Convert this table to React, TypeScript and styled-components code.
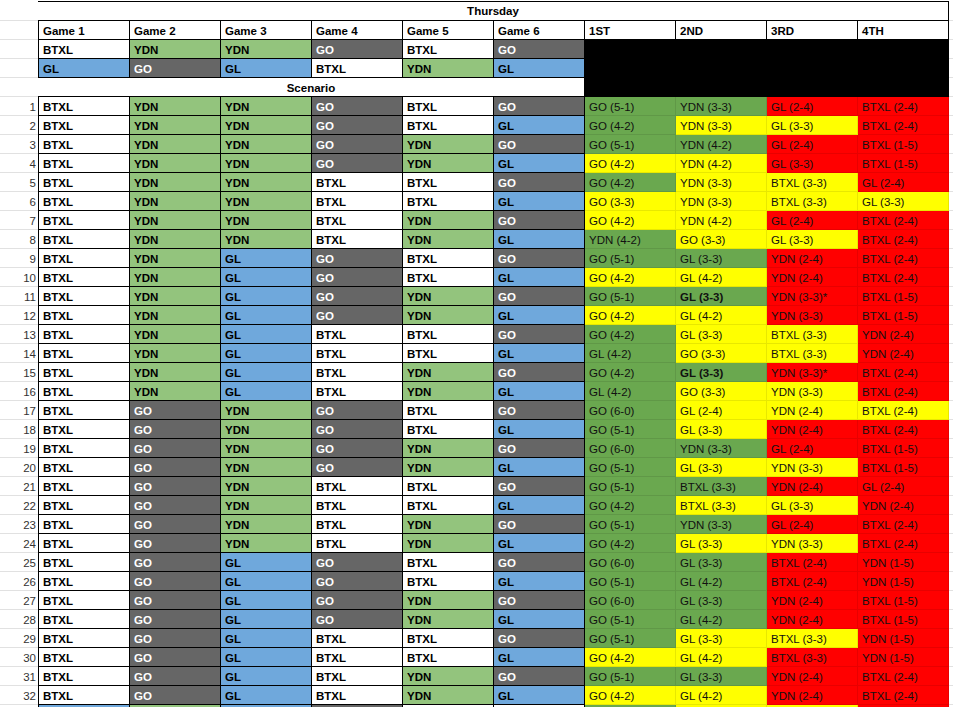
import React from "react";
import styled, { createGlobalStyle, css } from "styled-components";

type Team = "BTXL" | "YDN" | "GO" | "GL";
type Tone = "g" | "y" | "r";

const GlobalStyle = createGlobalStyle`
  body {
    margin: 0;
    background: #ffffff;
    font-family: "Liberation Sans", Arial, sans-serif;
  }
`;

const teamFill: Record<Team, string> = {
  BTXL: "#ffffff",
  YDN: "#93c47d",
  GO: "#666666",
  GL: "#6fa8dc",
};

const toneFill: Record<Tone, string> = {
  g: "#6aa84f",
  y: "#ffff00",
  r: "#ff0000",
};

const Sheet = styled.div`
  display: grid;
  grid-template-columns: 38px 92px repeat(9, 91px) 1fr;
  grid-template-rows: 20px;
  grid-auto-rows: 19px;
  padding-top: 1px;
  width: 953px;
  height: 706px;
  overflow: hidden;
  font-size: 11.5px;
  color: #000;
`;

const textBox = css`
  box-sizing: border-box;
  padding: 4px 4px 0;
  line-height: 13px;
  white-space: nowrap;
  overflow: hidden;
`;

const RowNum = styled.div`
  ${textBox};
  padding-right: 2px;
  text-align: right;
  color: #333;
  border-bottom: 1px solid #e1e1e1;
`;

const Filler = styled.div`
  border-bottom: 1px solid #e1e1e1;
`;

const Cell = styled.div<{ $fill?: string; $first?: boolean; $dark?: boolean }>`
  ${textBox};
  font-weight: bold;
  background: ${(p) => p.$fill ?? "#ffffff"};
  color: ${(p) => (p.$dark ? "#ffffff" : "#000000")};
  border-right: 1px solid #000;
  border-bottom: 1px solid #000;
  ${(p) => p.$first && "border-left: 1px solid #000;"}
`;

const Title = styled(Cell)`
  grid-column: 2 / span 10;
  border-top: 1px solid #000;
  padding-top: 3px;
  text-align: center;
`;

const Scenario = styled(Cell)`
  grid-column: 2 / span 6;
  text-align: center;
`;

const Blackout = styled.div`
  grid-column: 8 / span 4;
  grid-row: 3 / span 3;
  background: #000;
`;

const Result = styled.div<{ $tone: Tone; $bold?: boolean }>`
  ${textBox};
  background: ${(p) => toneFill[p.$tone]};
  font-weight: ${(p) => (p.$bold ? "bold" : "normal")};
  color: #111;
  border-right: 1px solid rgba(0, 0, 0, 0.09);
  border-bottom: 1px solid rgba(0, 0, 0, 0.09);
`;

const headerTeams: Team[][] = [
  ["BTXL", "YDN", "YDN", "GO", "BTXL", "GO"],
  ["GL", "GO", "GL", "BTXL", "YDN", "GL"],
];

// games for scenario i (0-based) follow a binary enumeration
const gamesFor = (i: number): Team[] => [
  "BTXL",
  i < 16 ? "YDN" : "GO",
  Math.floor(i / 8) % 2 === 0 ? "YDN" : "GL",
  Math.floor(i / 4) % 2 === 0 ? "GO" : "BTXL",
  Math.floor(i / 2) % 2 === 0 ? "BTXL" : "YDN",
  i % 2 === 0 ? "GO" : "GL",
];

// "text:tone" with a trailing ! for bold
const results: string[] = [
  "GO (5-1):g|YDN (3-3):g|GL (2-4):r|BTXL (2-4):r",
  "GO (4-2):g|YDN (3-3):y|GL (3-3):y|BTXL (2-4):r",
  "GO (5-1):g|YDN (4-2):g|GL (2-4):r|BTXL (1-5):r",
  "GO (4-2):y|YDN (4-2):y|GL (3-3):r|BTXL (1-5):r",
  "GO (4-2):g|YDN (3-3):y|BTXL (3-3):y|GL (2-4):r",
  "GO (3-3):y|YDN (3-3):y|BTXL (3-3):y|GL (3-3):y",
  "GO (4-2):y|YDN (4-2):y|GL (2-4):r|BTXL (2-4):r",
  "YDN (4-2):g|GO (3-3):y|GL (3-3):y|BTXL (2-4):r",
  "GO (5-1):g|GL (3-3):g|YDN (2-4):r|BTXL (2-4):r",
  "GO (4-2):y|GL (4-2):y|YDN (2-4):r|BTXL (2-4):r",
  "GO (5-1):g|GL (3-3):g!|YDN (3-3)*:r|BTXL (1-5):r",
  "GO (4-2):y|GL (4-2):y|YDN (3-3):r|BTXL (1-5):r",
  "GO (4-2):g|GL (3-3):y|BTXL (3-3):y|YDN (2-4):r",
  "GL (4-2):g|GO (3-3):y|BTXL (3-3):y|YDN (2-4):r",
  "GO (4-2):g|GL (3-3):g!|YDN (3-3)*:r|BTXL (2-4):r",
  "GL (4-2):g|GO (3-3):y|YDN (3-3):y|BTXL (2-4):r",
  "GO (6-0):g|GL (2-4):y|YDN (2-4):y|BTXL (2-4):y",
  "GO (5-1):g|GL (3-3):y|YDN (2-4):r|BTXL (2-4):r",
  "GO (6-0):g|YDN (3-3):g|GL (2-4):r|BTXL (1-5):r",
  "GO (5-1):g|GL (3-3):y|YDN (3-3):y|BTXL (1-5):r",
  "GO (5-1):g|BTXL (3-3):g|YDN (2-4):r|GL (2-4):r",
  "GO (4-2):g|BTXL (3-3):y|GL (3-3):y|YDN (2-4):r",
  "GO (5-1):g|YDN (3-3):g|GL (2-4):r|BTXL (2-4):r",
  "GO (4-2):g|GL (3-3):y|YDN (3-3):y|BTXL (2-4):r",
  "GO (6-0):g|GL (3-3):g|BTXL (2-4):r|YDN (1-5):r",
  "GO (5-1):g|GL (4-2):g|BTXL (2-4):r|YDN (1-5):r",
  "GO (6-0):g|GL (3-3):g|YDN (2-4):r|BTXL (1-5):r",
  "GO (5-1):g|GL (4-2):g|YDN (2-4):r|BTXL (1-5):r",
  "GO (5-1):g|GL (3-3):y|BTXL (3-3):y|YDN (1-5):r",
  "GO (4-2):y|GL (4-2):y|BTXL (3-3):r|YDN (1-5):r",
  "GO (5-1):g|GL (3-3):g|YDN (2-4):r|BTXL (2-4):r",
  "GO (4-2):y|GL (4-2):y|YDN (2-4):r|BTXL (2-4):r",
  ":g|:y|:y|:r",
];

// only the top edge of scenario 33 shows at the bottom of the window
const extraRow: Team[] = ["GL", "YDN", "GL", "GO", "BTXL", "BTXL"];

const TeamCells = ({ teams, hideText }: { teams: Team[]; hideText?: boolean }) => (
  <>
    {teams.map((t, i) => (
      <Cell key={i} $fill={teamFill[t]} $dark={t === "GO"} $first={i === 0}>
        {hideText ? "" : t}
      </Cell>
    ))}
  </>
);

export default function App() {
  return (
    <>
      <GlobalStyle />
      <Sheet>
        <Blackout />

        <RowNum />
        <Title>Thursday</Title>
        <Filler />

        <RowNum />
        {["Game 1", "Game 2", "Game 3", "Game 4", "Game 5", "Game 6", "1ST", "2ND", "3RD", "4TH"].map(
          (h, i) => (
            <Cell key={h} $first={i === 0}>
              {h}
            </Cell>
          )
        )}
        <Filler />

        {headerTeams.map((teams, r) => (
          <React.Fragment key={r}>
            <RowNum />
            <TeamCells teams={teams} />
            <Filler />
          </React.Fragment>
        ))}

        <RowNum />
        <Scenario>Scenario</Scenario>
        <Filler />

        {results.map((line, i) => (
          <React.Fragment key={i}>
            <RowNum>{i < 32 ? i + 1 : ""}</RowNum>
            <TeamCells teams={i < 32 ? gamesFor(i) : extraRow} hideText={i >= 32} />
            {line.split("|").map((part, j) => {
              const bold = part.endsWith("!");
              const [text, tone] = part.replace("!", "").split(":");
              return (
                <Result key={j} $tone={tone as Tone} $bold={bold}>
                  {text}
                </Result>
              );
            })}
            <Filler />
          </React.Fragment>
        ))}
      </Sheet>
    </>
  );
}
